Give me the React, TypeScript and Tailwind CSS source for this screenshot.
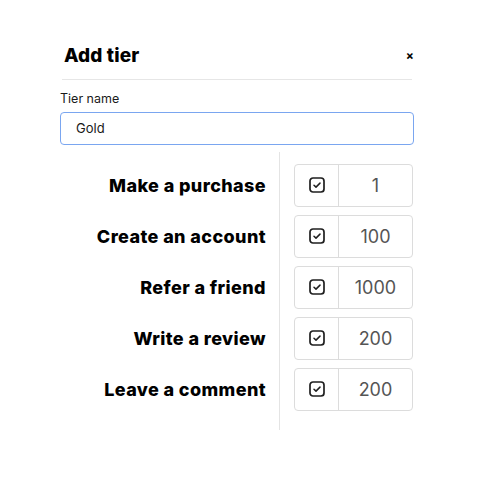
import React, { useState } from 'react';

const initTasks = [
    { label: "Make a purchase", points: "1" },
    { label: "Create an account", points: "100" },
    { label: "Refer a friend", points: "1000" },
    { label: "Write a review", points: "200" },
    { label: "Leave a comment", points: "200" },
];

function CheckIcon() {
    return (
        <svg width="16" height="16" viewBox="0 0 16 16" fill="none">
            <rect x="1" y="1" width="14" height="14" rx="3" stroke="#1f1f1f" strokeWidth="1.7" />
            <path d="M5 8.2l2 1.9 4-4" stroke="#1f1f1f" strokeWidth="1.5" strokeLinecap="round" strokeLinejoin="round" />
        </svg>
    );
}

export default function App() {
    const [tierName, setTierName] = useState("Gold");
    const [tasks] = useState(initTasks);
    return (
        <div className="w-[480px] h-[480px] bg-white pt-[42px] pl-[60px]" style={{ fontFamily: "Inter, 'Noto Sans', sans-serif" }}>
            <div className="w-[354px]">
                {/* Header */}
                <div className="flex items-center justify-between pl-1 h-[28px]">
                    <h2 className="text-[19px] font-extrabold text-black tracking-[0.1px]">Add tier</h2>
                    <span className="text-[12px] font-bold text-black leading-none">×</span>
                </div>
                <div className="mx-[2px] mt-[9px] border-t border-[#e6e6e6]"></div>
                {/* Tier name */}
                <label htmlFor="tierName" className="block mt-[10px] text-[12.5px] text-[#1a1a1a]">Tier name</label>
                <input
                    id="tierName"
                    type="text"
                    value={tierName}
                    onChange={(e) => setTierName(e.target.value)}
                    className="mt-[3px] w-full h-[33px] px-[15px] rounded-[4px] border border-[#7aa6f0] text-[13px] text-[#1a1a1a] outline-none"
                />
                {/* Tasks */}
                <div className="flex mt-[7px]">
                    <div className="w-[220px] border-r border-[#e4e4e4] pt-[12px] pb-[19px] pr-[13px] flex flex-col gap-[8px]">
                        {tasks.map((task) => (
                            <div key={task.label} className="h-[43px] flex items-center justify-end text-[18px] font-extrabold tracking-[0.4px] text-black">
                                {task.label}
                            </div>
                        ))}
                    </div>
                    <div className="pl-[14px] pt-[12px] flex flex-col gap-[8px]">
                        {tasks.map((task) => (
                            <div key={task.label} className="w-[119px] h-[43px] flex rounded-[4px] border border-[#dcdcdc]">
                                <div className="w-[44px] flex items-center justify-center border-r border-[#dcdcdc]">
                                    <CheckIcon />
                                </div>
                                <div className="flex-1 flex items-center justify-center text-[18px] text-[#555555]">
                                    {task.points}
                                </div>
                            </div>
                        ))}
                    </div>
                </div>
            </div>
        </div>
    );
}
